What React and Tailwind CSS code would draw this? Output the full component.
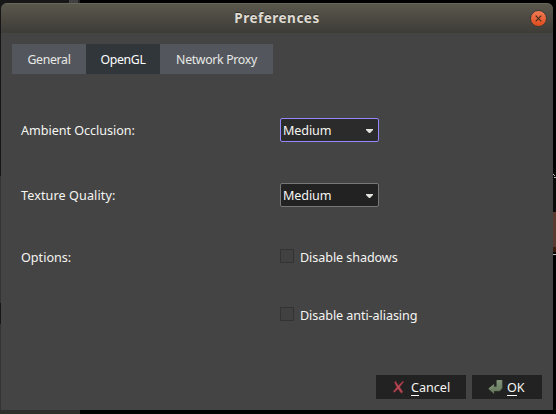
import React from "react";

function Tab({ children, className }) {
  return (
    <button className={`flex h-[30px] items-center justify-center whitespace-nowrap text-[12.3px] tracking-[-0.32px] ${className}`}>
      <span className="relative top-px">{children}</span>
    </button>
  );
}

function Select({ className }) {
  return (
    <button className={`flex h-6 w-[99px] items-center justify-between rounded-[2px] border pr-[5px] pl-[2px] ${className}`}>
      <span className="relative top-px tracking-[-0.1px]">Medium</span>
      <svg width="7" height="4" viewBox="0 0 7 4" fill="#e2e2df" className="relative top-px">
        <path d="M0 0h7v1L4 4H3L0 1z" />
      </svg>
    </button>
  );
}

function Check({ children, className }) {
  return (
    <label className={`flex h-[14px] items-center gap-[6px] ${className}`}>
      <span className="size-[14px] border border-[#333333] bg-[#414141]" />
      <span className="relative top-[2px] whitespace-nowrap tracking-[-0.08px]">{children}</span>
    </label>
  );
}

function Backdrop() {
  return (
    <div className="absolute inset-0">
      <div className="absolute top-0 left-0 h-[414px] w-[69px] bg-[#171717]" />
      <div className="absolute top-0 left-[69px] h-1 w-[9px] bg-[#414141]" />
      <div className="absolute top-0 left-[78px] h-1 w-[2px] bg-[#242424]" />
      <div className="absolute top-[176px] left-0 h-[127px] w-px bg-[#343334]" />
      <div className="absolute top-[324px] left-0 h-[90px] w-px bg-[#343334]" />
      <div className="absolute top-[410px] left-0 h-1 w-20 bg-[#2f2d2e]" />
      <svg className="absolute top-[172px] left-[553px]" width="3" height="84">
        <path fill="#0a0a0a" d="M0 0h3v84H0z" />
        <path stroke="#b8b8b8" d="M0 2.5h1M1 3.5h1M1 5.5h2M0 82.5h3" />
        <path fill="#583a31" d="M0 40h3v35H0z" />
        <path fill="#3b1d10" d="M0 75h3v5H0z" />
      </svg>
    </div>
  );
}

export default function App() {
  return (
    <div className="relative h-[414px] w-[556px] overflow-hidden bg-black pt-[3px] pl-px font-['Noto_Sans',sans-serif] text-[12.6px] leading-[18px] text-[#f5f5f2]">
      <Backdrop />
      <main className="relative flex h-[407px] w-[552px] flex-col overflow-hidden rounded-t-[6px] bg-[#444444]">
        <header className="grid h-[30px] shrink-0 grid-cols-[40px_1fr_40px] items-center border-t border-[#68665b] bg-linear-to-b from-[#5a574d] to-[#3d3c37]">
          <h1 className="relative -top-px col-start-2 text-center text-[13.5px] font-bold tracking-[0.5px] text-[#dfdbd2] [text-shadow:0_-1px_0_#302f2b]">Preferences</h1>
          <button aria-label="Close" className="mr-[6px] flex size-[17px] items-center justify-center justify-self-end rounded-full border border-[#403a33] bg-linear-to-b from-[#f27b55] to-[#df4b17]">
            <svg width="7" height="7" viewBox="0 0 7 7" fill="none" stroke="#45301f" strokeWidth="1.2">
              <path d="M.7.7 6.3 6.3M6.3.7.7 6.3" />
            </svg>
          </button>
        </header>
        <nav className="mt-[11px] ml-[11px] flex text-[#e8e8e6]">
          <Tab className="w-[74px] bg-[#53575d]">General</Tab>
          <Tab className="w-[74px] bg-[#31363b] text-white">OpenGL</Tab>
          <Tab className="w-[113px] bg-[#53575d]">Network Proxy</Tab>
        </nav>
        <section className="mt-[44px] ml-5 grid grid-cols-[259px_1fr]">
          <div className="relative top-1 h-[65px] tracking-[-0.04px]">Ambient Occlusion:</div>
          <Select className="border-[#9487ff] bg-[#2b2b2b]" />
          <div className="relative top-1 h-[66px] tracking-[0.1px]">Texture Quality:</div>
          <Select className="border-[#777777] bg-[#222222]" />
          <div className="relative top-0 h-[58px]">Options:</div>
          <Check>Disable shadows</Check>
          <Check className="col-start-2">Disable anti-aliasing</Check>
        </section>
        <footer className="mt-auto mr-[11px] mb-[11px] flex justify-end gap-[6px]">
          <button className="flex h-6 w-[90px] items-center bg-[#222222] pl-[16px]">
            <svg width="14" height="15" viewBox="0 0 14 15">
              <path d="M2.4 2.2 3.6 1 6.4 5.4 11 1 11.8 1.8 7.8 7 11 12 9.2 13.3 6 9 2.4 12.5 1.2 11.5 4.7 7.2Z" fill="#b84855" stroke="#6b2630" strokeWidth=".6" />
            </svg>
            <span className="relative top-px ml-[5px] flex"><span className="h-[17px] border-b border-white">C</span>ancel</span>
          </button>
          <button className="flex h-6 w-[70px] items-center bg-[#222222] pl-[16px]">
            <svg width="15" height="15" viewBox="0 0 15 15">
              <defs>
                <linearGradient id="ok" x1="0" x2="0" y1="0" y2="1">
                  <stop stopColor="#82937a" />
                  <stop offset="1" stopColor="#64775a" />
                </linearGradient>
              </defs>
              <path d="M8.6.3h5.6v7.9L11.7 11H6v2.8L.4 8.8 6 4.3V6.8h2.2l.4-.5Z" fill="url(#ok)" stroke="#55654c" strokeWidth=".4" />
              <path d="M9 .7h4.8M1.3 8.6 5.8 5" stroke="#9aaa8c" strokeWidth=".7" />
            </svg>
            <span className="relative top-px ml-[4px] flex"><span className="h-[17px] border-b border-white">O</span>K</span>
          </button>
        </footer>
      </main>
    </div>
  );
}
